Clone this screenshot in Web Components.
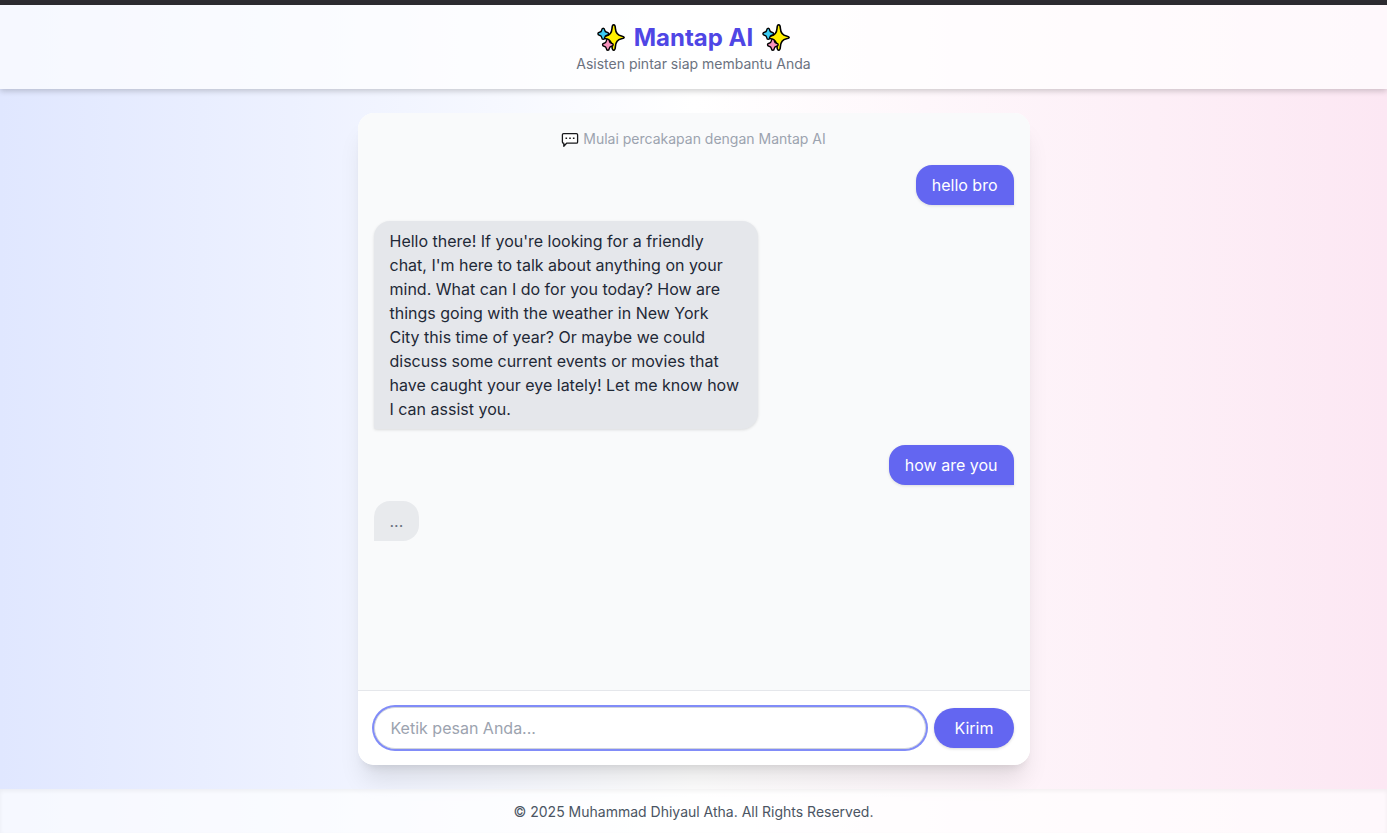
<!DOCTYPE html>
<html lang="id">
<head>
<meta charset="utf-8">
<meta name="viewport" content="width=device-width, initial-scale=1">
<title>Mantap AI</title>
<style>
  body { margin: 0; font-family: Inter, "Noto Sans", sans-serif; font-size: 16px; line-height: 24px; color: #1f2937; }
</style>
</head>
<body>
<mantap-app>
  <app-header slot="header">
    <span slot="title">Mantap AI</span>
    <span slot="tagline">Asisten pintar siap membantu Anda</span>
  </app-header>
  <chat-card>
    <chat-intro>Mulai percakapan dengan Mantap AI</chat-intro>
    <chat-bubble from="user">hello bro</chat-bubble>
    <chat-bubble from="bot">Hello there! If you're looking for a friendly chat, I'm here to talk about anything on your mind. What can I do for you today? How are things going with the weather in New York City this time of year? Or maybe we could discuss some current events or movies that have caught your eye lately! Let me know how I can assist you.</chat-bubble>
    <chat-bubble from="user">how are you</chat-bubble>
    <chat-bubble from="bot" pending>...</chat-bubble>
    <chat-composer slot="composer"></chat-composer>
  </chat-card>
  <app-footer slot="footer">© 2025 Muhammad Dhiyaul Atha. All Rights Reserved.</app-footer>
</mantap-app>

<script>
const define = (name, html, setup) => {
  const template = document.createElement('template');
  template.innerHTML = html;
  customElements.define(name, class extends HTMLElement {
    constructor() {
      super();
      this.attachShadow({ mode: 'open' }).append(template.content.cloneNode(true));
      if (setup) setup(this);
    }
  });
};

define('mantap-app', `
  <style>
    :host { display: flex; flex-direction: column; min-height: 100vh; box-sizing: border-box;
      border-top: 5px solid #2d2c31;
      background: linear-gradient(to right, #e0e7ff, #ffffff, #fce7f3) border-box; }
    main { flex: 1; display: flex; justify-content: center; padding: 24px 16px; }
  </style>
  <slot name="header"></slot>
  <main><slot></slot></main>
  <slot name="footer"></slot>`);

define('sparkle-icon', `
  <style>:host { display: block; width: 30px; height: 30px; } svg { display: block; }</style>
  <svg width="30" height="30" viewBox="0 0 30 30" stroke="#000" stroke-width="1.600" stroke-linejoin="round" aria-hidden="true">
    <path fill="#fff000" d="M17.700 1.800Q19.200 1.800 19.400 5.500Q19.800 11.800 25.500 13Q28.200 13.600 28.200 14.400Q28.200 15.200 25.500 15.800Q19.800 17 19.400 23.500Q19.200 27.200 17.700 27.200Q16.200 27.200 16 23.500Q15.600 17 10 15.800Q7.200 15.200 7.200 14.400Q7.200 13.600 10 13Q15.600 11.800 16 5.500Q16.200 1.800 17.700 1.800Z"/>
    <g stroke-width="1.400">
      <path id="s" fill="#3ccdf4" d="M7.200 5.200Q8.500 5.200 8.700 7.100Q9 9 10.900 9.300Q12.600 9.600 12.600 10.800Q12.600 12 10.900 12.300Q9 12.600 8.700 14.500Q8.500 16.400 7.200 16.400Q5.900 16.400 5.700 14.500Q5.400 12.600 3.500 12.300Q1.900 12 1.900 10.800Q1.900 9.600 3.500 9.300Q5.400 9 5.700 7.100Q5.900 5.200 7.200 5.200Z"/>
      <path fill="#f893bd" transform="translate(4.600 10.900)" d="M7.200 5.200Q8.500 5.200 8.700 7.100Q9 9 10.900 9.300Q12.600 9.600 12.600 10.800Q12.600 12 10.900 12.300Q9 12.600 8.700 14.500Q8.500 16.400 7.200 16.400Q5.900 16.400 5.700 14.500Q5.400 12.600 3.500 12.300Q1.900 12 1.900 10.800Q1.900 9.600 3.500 9.300Q5.400 9 5.700 7.100Q5.900 5.200 7.200 5.200Z"/>
    </g>
  </svg>`);

define('app-header', `
  <style>
    :host { display: block; padding: 17px 16px 15px; text-align: center; background: rgba(255,255,255,.7);
      box-shadow: 0 2px 6px rgba(0,0,0,.2); }
    h1 { margin: 0; display: flex; justify-content: center; align-items: center; gap: 8px; height: 32px;
      font-size: 24px; line-height: 32px; font-weight: 700; color: #4f46e5; }
    p { margin: 0; font-size: 14px; line-height: 20px; color: #6b7280; }
  </style>
  <header>
    <h1><sparkle-icon></sparkle-icon><slot name="title"></slot><sparkle-icon></sparkle-icon></h1>
    <p><slot name="tagline"></slot></p>
  </header>`);

define('chat-card', `
  <style>
    :host { display: flex; flex-direction: column; width: 100%; max-width: 672px; border-radius: 16px;
      overflow: hidden; background: #fff; box-shadow: 0 20px 25px -5px rgba(0,0,0,.1), 0 8px 10px -6px rgba(0,0,0,.1); }
    section { flex: 1; display: flex; flex-direction: column; gap: 16px; padding: 16px; background: #f9fafb; }
  </style>
  <section aria-label="Percakapan"><slot></slot></section>
  <slot name="composer"></slot>`);

define('chat-intro', `
  <style>
    :host { display: flex; justify-content: center; align-items: center; gap: 4px;
      font-size: 14px; line-height: 20px; color: #9ca3af; }
  </style>
  <svg width="18" height="18" viewBox="0 0 18 18" fill="#fff" stroke="#18181b" stroke-width="1.300" stroke-linejoin="round" aria-hidden="true">
    <path d="M2.600 3.600H15.400Q16.600 3.600 16.600 4.800V12Q16.600 13.200 15.400 13.200H5.600L2.800 16.200V13.200H2.600Q1.400 13.200 1.400 12V4.800Q1.400 3.600 2.600 3.600Z"/>
    <path stroke="none" fill="#18181b" d="M4.500 7.500h1.600v1.600H4.500zM8.200 7.500h1.600v1.600H8.200zM11.900 7.500h1.600v1.600h-1.600z"/>
  </svg>
  <slot></slot>`);

define('chat-bubble', `
  <style>
    :host { display: block; box-sizing: border-box; max-width: 384px; padding: 8px 16px; border-radius: 16px;
      box-shadow: 0 1px 3px rgba(0,0,0,.12); }
    :host([from="user"]) { align-self: flex-end; background: #6366f1; color: #fff; border-bottom-right-radius: 0; }
    :host([from="bot"]) { align-self: flex-start; background: #e5e7eb; color: #1f2937; border-bottom-left-radius: 2px; }
    :host([pending]) { background: #e8eaed; color: #6b7280; border-bottom-left-radius: 0; box-shadow: none; }
  </style>
  <slot></slot>`);

define('chat-composer', `
  <style>
    form { display: flex; align-items: center; gap: 8px; margin: 0; padding: 16px; background: #fff; border-top: 1px solid #e5e7eb; }
    input { flex: 1; min-width: 0; box-sizing: border-box; height: 42px; padding: 8px 16px; font: inherit; color: #1f2937;
      background: #fff; border: 1px solid #d1d5db; border-radius: 21px; outline: none;
      box-shadow: 0 0 0 2px #818cf8; }
    input::placeholder { color: #9ca3af; opacity: 1; }
    button { padding: 8px 20px; font: inherit; color: #fff; background: #6366f1; border: 0; border-radius: 20px;
      box-shadow: 0 1px 3px rgba(0,0,0,.15); cursor: pointer; }
  </style>
  <form>
    <input type="text" aria-label="Pesan" placeholder="Ketik pesan Anda..." autocomplete="off">
    <button type="submit">Kirim</button>
  </form>`, host => {
    host.shadowRoot.querySelector('form').addEventListener('submit', event => event.preventDefault());
  });

define('app-footer', `
  <style>
    :host { display: block; padding: 13px 12px 11px; text-align: center; font-size: 14px; line-height: 20px; color: #4b5563;
      background: rgba(255,255,255,.7); box-shadow: inset 0 2px 4px rgba(0,0,0,.05); }
  </style>
  <footer><slot></slot></footer>`);
</script>
</body>
</html>
